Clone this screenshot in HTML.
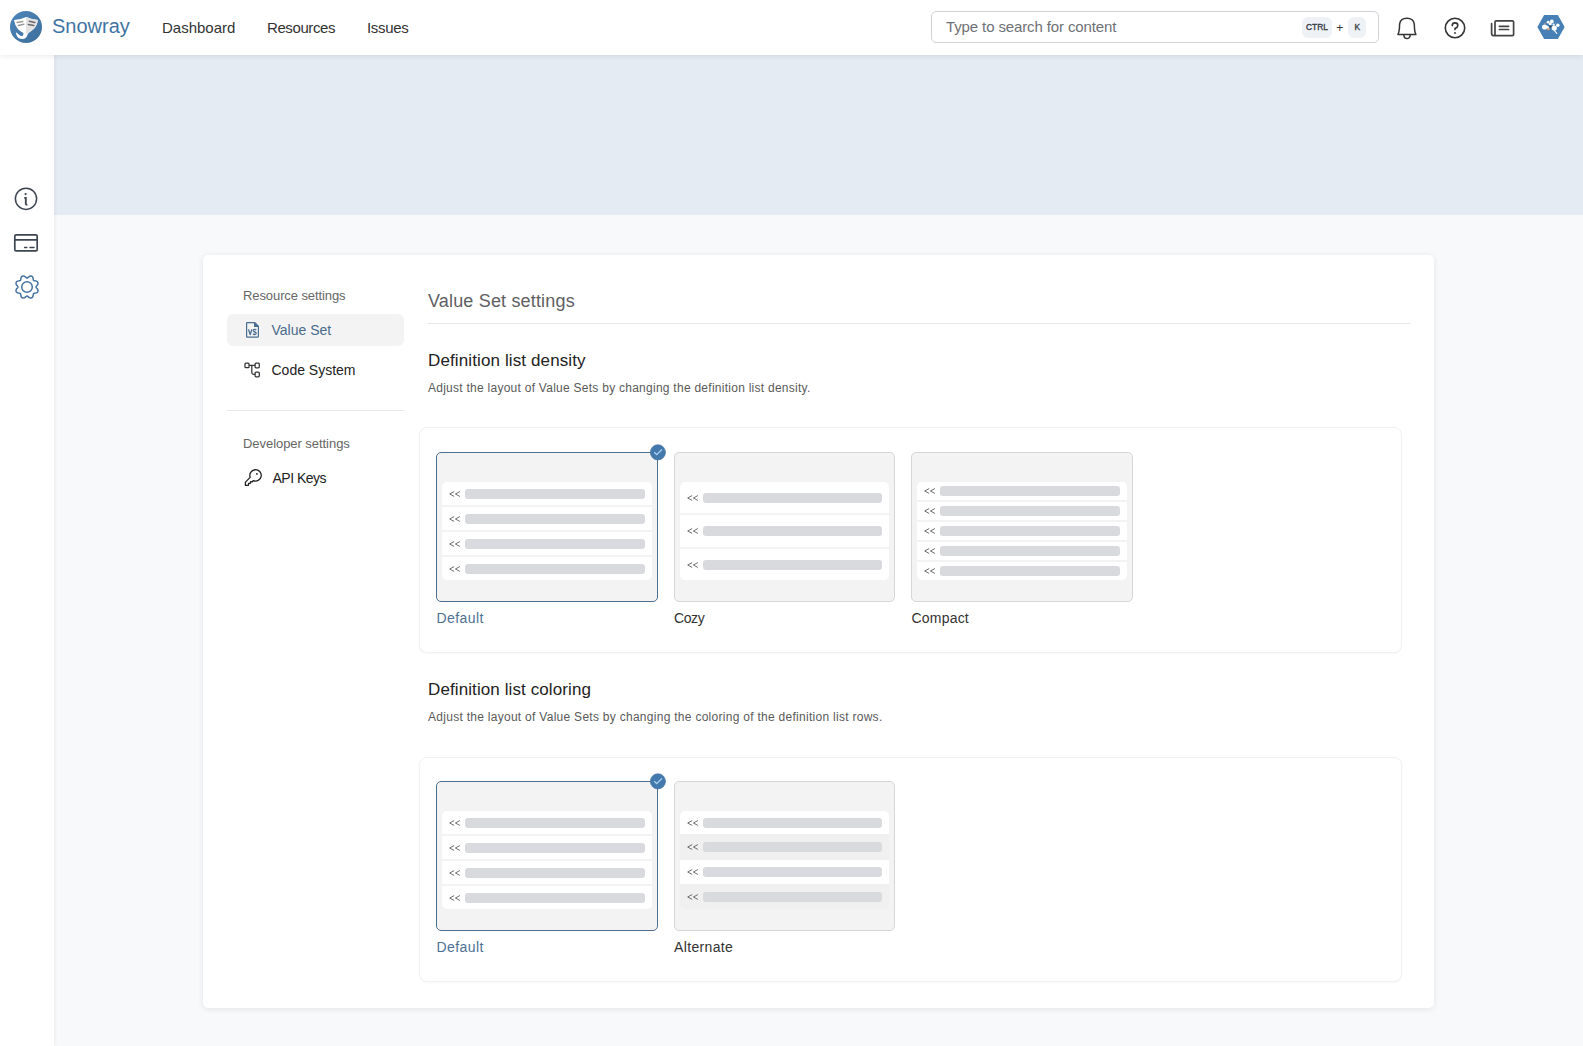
<!DOCTYPE html>
<html><head><meta charset="utf-8">
<style>
*{box-sizing:border-box;margin:0;padding:0}
html,body{width:1583px;height:1046px;overflow:hidden;background:#f7f9fb;font-family:"Liberation Sans",sans-serif;color:#333}
.abs{position:absolute}
#header{position:absolute;left:0;top:0;width:1583px;height:55px;background:#fff;box-shadow:0 1px 6px rgba(0,0,0,0.085);z-index:5}
#side{position:absolute;left:0;top:55px;width:54px;height:991px;background:#fff;box-shadow:1px 0 4px rgba(0,0,0,0.055);z-index:4}
#banner{position:absolute;left:54px;top:55px;width:1529px;height:160px;background:#e5ebf3}
.t{position:absolute;white-space:nowrap;line-height:1}
#card{position:absolute;left:203px;top:255px;width:1231px;height:753px;background:#fff;border-radius:5px;box-shadow:0 1px 6px rgba(0,0,0,0.09)}
.panel{position:absolute;left:419px;width:983px;height:226px;border:1px solid #f1f1f1;border-radius:8px;background:#fff;box-shadow:0 1px 2px rgba(0,0,0,0.035)}
.opt{position:absolute;width:222px;height:150px;background:#f3f3f3;border:1px solid #d6d6d6;border-radius:5px}
.opt.sel{border-color:#4f6f8e}
.list{position:absolute;left:5px;right:5px;background:#fff;border-radius:5px;overflow:hidden}
.row{position:absolute;left:0;right:0;background:#fff}
.row .ch{position:absolute;left:7px;font-size:10px;color:#555;letter-spacing:-0.5px}
.row .bar{position:absolute;left:23px;right:7px;height:10px;background:#d9dade;border-radius:3px}
.lbl{position:absolute;font-size:15px;line-height:1;white-space:nowrap;color:#333}
.lbl.sel{color:#4a77a4}
.chk{position:absolute;width:16px;height:16px;border-radius:50%;background:#4479a9}
</style></head><body>
<div id="header">
  <svg class="abs" style="left:10px;top:11px" width="32" height="32" viewBox="0 0 32 32">
    <defs><linearGradient id="lg" x1="0" y1="0" x2="1" y2="1"><stop offset="0" stop-color="#4d86bb"/><stop offset="1" stop-color="#3d6e9b"/></linearGradient><clipPath id="rh"><rect x="16" y="0" width="16" height="22.6"/></clipPath></defs>
    <circle cx="16" cy="16" r="16" fill="url(#lg)"/>
    <path id="ray" d="M4 9 Q10.5 8.6 16.2 6 Q22 8.6 27.9 9 Q27 16.5 20.5 20.6 Q18 21.8 17.4 24 Q16.6 27.6 12.6 28.1 Q8.4 28.3 6.8 24.8 Q6 23 5.9 21.3 Q7.6 22.4 9.4 24 Q11.2 25.6 12.9 24.4 Q14 23.2 13 21.8 Q10.5 20.4 8 18.2 Q4.8 14.6 4 9 Z" fill="#fff"/>
    <path d="M4 9 Q10.5 8.6 16.2 6 Q22 8.6 27.9 9 Q27 16.5 20.5 20.6 Q18 21.8 17.4 24 Q16.6 27.6 12.6 28.1 Q8.4 28.3 6.8 24.8 Q6 23 5.9 21.3 Q7.6 22.4 9.4 24 Q11.2 25.6 12.9 24.4 Q14 23.2 13 21.8 Q10.5 20.4 8 18.2 Q4.8 14.6 4 9 Z" fill="#e4e4e4" clip-path="url(#rh)"/>
    <path d="M7.1 11.4 L12.8 10.4 M8.3 14.5 L13.8 13.3" stroke="#9a9a9a" stroke-width="1.5" stroke-linecap="round"/>
    <path d="M19.3 10.2 L24.8 11.6 M18.3 13.5 L23.8 14.5" stroke="#6a6a6a" stroke-width="1.5" stroke-linecap="round"/>
  </svg>
  <div class="t" style="left:52px;top:16px;font-size:20px;color:#3f74a3">Snowray</div>
  <div class="t" style="left:162px;top:20px;font-size:15px;color:#333">Dashboard</div>
  <div class="t" style="left:267px;top:20px;font-size:15px;color:#333;letter-spacing:-0.4px">Resources</div>
  <div class="t" style="left:367px;top:20px;font-size:15px;color:#333;letter-spacing:-0.3px">Issues</div>
  <div class="abs" style="left:931px;top:11px;width:448px;height:32px;border:1px solid #cfd3d8;border-radius:5px"></div>
  <div class="t" style="left:946px;top:19.4px;font-size:15px;color:#6e7175;letter-spacing:-0.12px">Type to search for content</div>

  <div class="abs" style="left:1302px;top:17px;width:30px;height:20px;border-radius:6px;background:#eef2f7;box-shadow:0 1px 1px rgba(0,0,0,0.06)"></div>
  <div class="t" style="left:1306px;top:22.6px;font-size:8.4px;color:#3a4048;-webkit-text-stroke:0.35px #3a4048;letter-spacing:0px">CTRL</div>
  <div class="t" style="left:1336.3px;top:22.3px;font-size:12px;color:#333">+</div>
  <div class="abs" style="left:1348px;top:17px;width:18px;height:20px;border-radius:6px;background:#eef2f7;box-shadow:0 1px 1px rgba(0,0,0,0.06)"></div>
  <div class="t" style="left:1354.6px;top:22.6px;font-size:8.4px;color:#3a4048;-webkit-text-stroke:0.35px #3a4048">K</div>
  <svg class="abs" style="left:1390px;top:10px" width="36" height="36" viewBox="0 0 36 36" fill="none" stroke="#333" stroke-width="1.5" stroke-linejoin="round">
    <path d="M7.9 24.5 Q9.2 22 9.4 18.5 L9.6 14.2 Q10.2 8.3 16.9 8.3 Q23.6 8.3 24.3 14.2 L24.5 18.5 Q24.7 22 25.9 24.5 Z"/>
    <path d="M13.8 24.8 Q14 28.6 17 28.6 Q20 28.6 20.3 24.8"/>
  </svg>
  <svg class="abs" style="left:1437px;top:10px" width="36" height="36" viewBox="0 0 36 36" fill="none" stroke="#333" stroke-width="1.6">
    <circle cx="18" cy="18" r="9.7"/>
    <path d="M15.2 15.6 Q15.3 12.9 18 12.9 Q20.8 12.9 20.8 15.4 Q20.8 17.2 18 18.4 L18 19.6" stroke-linecap="round"/>
    <circle cx="18" cy="23" r="0.9" fill="#333" stroke="none"/>
  </svg>
  <svg class="abs" style="left:1485px;top:10px" width="40" height="35" viewBox="0 0 40 35" fill="none" stroke="#444" stroke-width="1.7" stroke-linecap="round" stroke-linejoin="round">
    <path d="M10 25 L10 12 Q10 10.8 11.2 10.8 L27.4 10.8 Q28.6 10.8 28.6 12 L28.6 24.6 Q28.6 25.6 27.4 25.6 L8.6 25.6 Q6.6 25.6 6.6 23.4 L6.6 13.6"/>
    <path d="M14.4 16.3 L23.6 16.3 M14.4 19.5 L23.6 19.5"/>
  </svg>
  <svg class="abs" style="left:1536px;top:14px" width="30" height="26" viewBox="0 0 30 26">
    <path d="M8.6 1.6 L21.4 1.6 L27.9 13 L21.4 24.4 L8.6 24.4 L2.1 13 Z" fill="#4680b6" stroke="#4680b6" stroke-width="1.4" stroke-linejoin="round"/>
    <g fill="#fff">
    <circle cx="8.6" cy="13" r="2.6"/>
    <circle cx="11.4" cy="13.2" r="1.5"/>
    <circle cx="12.1" cy="8.2" r="1.4"/>
    <circle cx="15.8" cy="7.4" r="1.9"/>
    <circle cx="14.3" cy="9.8" r="1.5"/>
    <circle cx="21.8" cy="11.3" r="1.8"/>
    <circle cx="18.3" cy="14" r="2.6"/>
    <circle cx="17.6" cy="10.6" r="1.1"/>
    </g>
    <circle cx="14.3" cy="12.4" r="1.25" fill="#33506e"/>
    <circle cx="12.4" cy="15.1" r="1.25" fill="#e8a873"/>
    <circle cx="9" cy="9.4" r="0.6" fill="#d9a27a"/>
    <circle cx="19.6" cy="9.3" r="0.5" fill="#8aa"/>
    <path d="M18.4 16.5 L20.8 19.4" stroke="#fff" stroke-width="1.1" stroke-linecap="round"/>
  </svg>
</div>
<div id="side">
  <svg class="abs" style="left:12px;top:130px" width="30" height="30" viewBox="0 0 30 30" fill="none" stroke="#3d4550" stroke-width="1.5">
    <circle cx="14" cy="13.8" r="10.6"/>
    <circle cx="13.6" cy="9.1" r="1.1" fill="#3d4550" stroke="none"/>
    <path d="M12.3 12.9 L13.8 12.9 L13.8 19.2 Q13.9 19.9 15.4 19.9" stroke-width="1.85"/>
  </svg>
  <svg class="abs" style="left:10px;top:174px" width="34" height="26" viewBox="0 0 34 26" fill="none" stroke="#3d4550" stroke-width="1.7" stroke-linecap="round">
    <rect x="4.8" y="5.9" width="22.4" height="15.9" rx="1.4"/>
    <path d="M4.8 10.9 L27.2 10.9" />
    <path d="M14.6 18.4 L16.8 18.4 M20 18.4 L24 18.4" stroke-width="1.5"/>
  </svg>
  <svg class="abs" style="left:12px;top:217px" width="30" height="30" viewBox="0 0 30 30" fill="none" stroke="#4673a2" stroke-width="1.5" stroke-linejoin="round">
    <path d="M15.00 6.06 C15.38 6.06 15.76 5.64 16.14 5.35 C16.52 5.06 16.90 4.53 17.28 4.31 C17.65 4.09 17.99 4.02 18.41 4.01 C18.82 4.00 19.37 4.08 19.75 4.26 C20.13 4.43 20.45 4.69 20.68 5.06 C20.91 5.43 21.04 6.03 21.14 6.49 C21.24 6.94 21.20 7.46 21.29 7.77 C21.37 8.09 21.48 8.21 21.63 8.37 C21.79 8.52 21.91 8.63 22.23 8.71 C22.54 8.80 23.06 8.76 23.51 8.86 C23.97 8.96 24.57 9.09 24.94 9.32 C25.31 9.55 25.57 9.87 25.74 10.25 C25.92 10.63 26.00 11.18 25.99 11.59 C25.98 12.01 25.91 12.35 25.69 12.72 C25.47 13.10 24.94 13.48 24.65 13.86 C24.36 14.24 23.94 14.62 23.94 15.00 C23.94 15.38 24.36 15.76 24.65 16.14 C24.94 16.52 25.47 16.90 25.69 17.28 C25.91 17.65 25.98 17.99 25.99 18.41 C26.00 18.82 25.92 19.37 25.74 19.75 C25.57 20.13 25.31 20.45 24.94 20.68 C24.57 20.91 23.97 21.04 23.51 21.14 C23.06 21.24 22.54 21.20 22.23 21.29 C21.91 21.37 21.79 21.48 21.63 21.63 C21.48 21.79 21.37 21.91 21.29 22.23 C21.20 22.54 21.24 23.06 21.14 23.51 C21.04 23.97 20.91 24.57 20.68 24.94 C20.45 25.31 20.13 25.57 19.75 25.74 C19.37 25.92 18.82 26.00 18.41 25.99 C17.99 25.98 17.65 25.91 17.28 25.69 C16.90 25.47 16.52 24.94 16.14 24.65 C15.76 24.36 15.38 23.94 15.00 23.94 C14.62 23.94 14.24 24.36 13.86 24.65 C13.48 24.94 13.10 25.47 12.72 25.69 C12.35 25.91 12.01 25.98 11.59 25.99 C11.18 26.00 10.63 25.92 10.25 25.74 C9.87 25.57 9.55 25.31 9.32 24.94 C9.09 24.57 8.96 23.97 8.86 23.51 C8.76 23.06 8.80 22.54 8.71 22.23 C8.63 21.91 8.52 21.79 8.37 21.63 C8.21 21.48 8.09 21.37 7.77 21.29 C7.46 21.20 6.94 21.24 6.49 21.14 C6.03 21.04 5.43 20.91 5.06 20.68 C4.69 20.45 4.43 20.13 4.26 19.75 C4.08 19.37 4.00 18.82 4.01 18.41 C4.02 17.99 4.09 17.65 4.31 17.28 C4.53 16.90 5.06 16.52 5.35 16.14 C5.64 15.76 6.06 15.38 6.06 15.00 C6.06 14.62 5.64 14.24 5.35 13.86 C5.06 13.48 4.53 13.10 4.31 12.72 C4.09 12.35 4.02 12.01 4.01 11.59 C4.00 11.18 4.08 10.63 4.26 10.25 C4.43 9.87 4.69 9.55 5.06 9.32 C5.43 9.09 6.03 8.96 6.49 8.86 C6.94 8.76 7.46 8.80 7.77 8.71 C8.09 8.63 8.21 8.52 8.37 8.37 C8.52 8.21 8.63 8.09 8.71 7.77 C8.80 7.46 8.76 6.94 8.86 6.49 C8.96 6.03 9.09 5.43 9.32 5.06 C9.55 4.69 9.87 4.43 10.25 4.26 C10.63 4.08 11.18 4.00 11.59 4.01 C12.01 4.02 12.35 4.09 12.72 4.31 C13.10 4.53 13.48 5.06 13.86 5.35 C14.24 5.64 14.62 6.06 15.00 6.06 Z"/>
    <circle cx="15" cy="15" r="5.3"/>
  </svg>
</div>
<div id="banner"></div>
<div id="card"></div>
<!--CARD-->
<div class="abs" style="left:227px;top:314px;width:177px;height:32px;border-radius:6px;background:#f3f3f3"></div>
<div class="t" style="left:243px;top:289.20px;font-size:13px;color:#666;letter-spacing:-0.09px">Resource settings</div>
<div class="t" style="left:271.5px;top:323.05px;font-size:14px;color:#4b6b8b;">Value Set</div>
<div class="t" style="left:271.5px;top:362.75px;font-size:14px;color:#222;">Code System</div>
<div class="abs" style="left:227px;top:410px;width:177px;height:1px;background:#e8e8e8"></div>
<div class="t" style="left:243px;top:437.00px;font-size:13px;color:#666;letter-spacing:-0.05px">Developer settings</div>
<div class="t" style="left:272.5px;top:470.95px;font-size:14px;color:#222;letter-spacing:-0.5px">API Keys</div>
<svg class="abs" style="left:244px;top:320px" width="18" height="20" viewBox="0 0 18 20" fill="none" stroke="#4a6d90" stroke-width="1.2" stroke-linejoin="round">
<path d="M3 2.6 L10.6 2.6 L14.4 6.5 L14.4 16.2 Q14.4 17.2 13.4 17.2 L3 17.2 Q2.6 17.2 2.6 16.6 L2.6 3.2 Q2.6 2.6 3 2.6 Z"/><path d="M10.6 2.6 L10.6 6.5 L14.4 6.5 Z" fill="#4a6d90"/>
<path d="M4.5 9.4 L6.2 14.6 L7.9 9.4" stroke-width="1.35"/><path d="M12.2 10 Q11.6 9.3 10.6 9.4 Q9.2 9.6 9.4 10.9 Q9.6 11.7 10.8 12 Q12.2 12.4 12.1 13.4 Q11.9 14.6 10.6 14.5 Q9.6 14.4 9.1 13.8" stroke-width="1.35"/>
</svg>
<svg class="abs" style="left:243px;top:361px" width="19" height="18" viewBox="0 0 19 18" fill="none" stroke="#333" stroke-width="1.25" stroke-linejoin="round">
<rect x="1.95" y="2.2" width="4.1" height="4.5" rx="1"/><rect x="12.1" y="2.2" width="4.2" height="4.6" rx="1"/><rect x="12.1" y="11.1" width="4.2" height="4.7" rx="1"/>
<path d="M6.05 4.4 L12.1 4.4 M8.8 4.4 L8.8 11.6 Q8.8 13.45 10.6 13.45 L12.1 13.45"/>
</svg>
<svg class="abs" style="left:243px;top:467px" width="21" height="21" viewBox="0 0 21 21" fill="none" stroke="#222" stroke-width="1.3" stroke-linejoin="round">
<path d="M7.2 10.4 A5.7 5.7 0 1 1 10.2 13.6 L9.4 14.8 L7.6 14.6 L7.2 16.4 L5.6 16.4 L5.4 18.4 L2.4 18.4 L2.4 15.1 Z"/>
<circle cx="13.9" cy="6.9" r="0.9" fill="#222" stroke="none"/>
</svg>
<div class="t" style="left:428px;top:292.26px;font-size:18px;color:#5f6063;letter-spacing:0.17px">Value Set settings</div>
<div class="abs" style="left:428px;top:323px;width:982px;height:1px;background:#e8e8e8"></div>
<div class="t" style="left:428px;top:351.91px;font-size:17px;color:#222;letter-spacing:0.12px">Definition list density</div>
<div class="t" style="left:428px;top:381.64px;font-size:12px;color:#5a5a5a;letter-spacing:0.26px">Adjust the layout of Value Sets by changing the definition list density.</div>
<div class="panel" style="top:427px;height:226px"></div>
<div class="opt sel" style="left:436px;top:452px;width:222px"></div>
<div class="abs" style="left:442px;top:482px;width:210px;height:98px;border-radius:5px;overflow:hidden;background:#f3f3f3">
<div class="abs" style="left:0;top:0px;width:210px;height:23px;background:#fff"></div>
<div class="abs" style="left:0;top:25px;width:210px;height:23px;background:#fff"></div>
<div class="abs" style="left:0;top:50px;width:210px;height:23px;background:#fff"></div>
<div class="abs" style="left:0;top:75px;width:210px;height:23px;background:#fff"></div>
</div>
<svg class="abs" style="left:449px;top:489.5px" width="12" height="8" viewBox="0 0 12 8" fill="none" stroke="#666" stroke-width="0.95"><path d="M5.2 1.55 L0.7 4 L5.2 6.45 M10.9 1.55 L6.4 4 L10.9 6.45"/></svg>
<div class="abs" style="left:465px;top:488.50px;width:180px;height:10px;border-radius:3px;background:#d9dadd"></div>
<svg class="abs" style="left:449px;top:514.5px" width="12" height="8" viewBox="0 0 12 8" fill="none" stroke="#666" stroke-width="0.95"><path d="M5.2 1.55 L0.7 4 L5.2 6.45 M10.9 1.55 L6.4 4 L10.9 6.45"/></svg>
<div class="abs" style="left:465px;top:513.50px;width:180px;height:10px;border-radius:3px;background:#d9dadd"></div>
<svg class="abs" style="left:449px;top:539.5px" width="12" height="8" viewBox="0 0 12 8" fill="none" stroke="#666" stroke-width="0.95"><path d="M5.2 1.55 L0.7 4 L5.2 6.45 M10.9 1.55 L6.4 4 L10.9 6.45"/></svg>
<div class="abs" style="left:465px;top:538.50px;width:180px;height:10px;border-radius:3px;background:#d9dadd"></div>
<svg class="abs" style="left:449px;top:564.5px" width="12" height="8" viewBox="0 0 12 8" fill="none" stroke="#666" stroke-width="0.95"><path d="M5.2 1.55 L0.7 4 L5.2 6.45 M10.9 1.55 L6.4 4 L10.9 6.45"/></svg>
<div class="abs" style="left:465px;top:563.50px;width:180px;height:10px;border-radius:3px;background:#d9dadd"></div>
<svg class="abs" style="left:649px;top:444px" width="17" height="17" viewBox="0 0 17 17"><circle cx="8.9" cy="8.3" r="7.6" fill="#4479ad" stroke="#3f6e9c" stroke-width="0.6"/><path d="M5.2 8.3 L7.7 10.6 L12.9 5.5" fill="none" stroke="#a9d1f2" stroke-width="1.3"/></svg>
<div class="opt" style="left:674px;top:452px;width:221px"></div>
<div class="abs" style="left:680px;top:482px;width:209px;height:98px;border-radius:5px;overflow:hidden;background:#f3f3f3">
<div class="abs" style="left:0;top:0px;width:209px;height:31px;background:#fff"></div>
<div class="abs" style="left:0;top:33px;width:209px;height:32px;background:#fff"></div>
<div class="abs" style="left:0;top:67px;width:209px;height:31px;background:#fff"></div>
</div>
<svg class="abs" style="left:687px;top:493.5px" width="12" height="8" viewBox="0 0 12 8" fill="none" stroke="#666" stroke-width="0.95"><path d="M5.2 1.55 L0.7 4 L5.2 6.45 M10.9 1.55 L6.4 4 L10.9 6.45"/></svg>
<div class="abs" style="left:703px;top:492.50px;width:179px;height:10px;border-radius:3px;background:#d9dadd"></div>
<svg class="abs" style="left:687px;top:527.0px" width="12" height="8" viewBox="0 0 12 8" fill="none" stroke="#666" stroke-width="0.95"><path d="M5.2 1.55 L0.7 4 L5.2 6.45 M10.9 1.55 L6.4 4 L10.9 6.45"/></svg>
<div class="abs" style="left:703px;top:526.00px;width:179px;height:10px;border-radius:3px;background:#d9dadd"></div>
<svg class="abs" style="left:687px;top:560.5px" width="12" height="8" viewBox="0 0 12 8" fill="none" stroke="#666" stroke-width="0.95"><path d="M5.2 1.55 L0.7 4 L5.2 6.45 M10.9 1.55 L6.4 4 L10.9 6.45"/></svg>
<div class="abs" style="left:703px;top:559.50px;width:179px;height:10px;border-radius:3px;background:#d9dadd"></div>
<div class="opt" style="left:911px;top:452px;width:222px"></div>
<div class="abs" style="left:917px;top:482px;width:210px;height:98px;border-radius:5px;overflow:hidden;background:#f3f3f3">
<div class="abs" style="left:0;top:0px;width:210px;height:18px;background:#fff"></div>
<div class="abs" style="left:0;top:20px;width:210px;height:18px;background:#fff"></div>
<div class="abs" style="left:0;top:40px;width:210px;height:18px;background:#fff"></div>
<div class="abs" style="left:0;top:60px;width:210px;height:18px;background:#fff"></div>
<div class="abs" style="left:0;top:80px;width:210px;height:18px;background:#fff"></div>
</div>
<svg class="abs" style="left:924px;top:487.0px" width="12" height="8" viewBox="0 0 12 8" fill="none" stroke="#666" stroke-width="0.95"><path d="M5.2 1.55 L0.7 4 L5.2 6.45 M10.9 1.55 L6.4 4 L10.9 6.45"/></svg>
<div class="abs" style="left:940px;top:486.00px;width:180px;height:10px;border-radius:3px;background:#d9dadd"></div>
<svg class="abs" style="left:924px;top:507.0px" width="12" height="8" viewBox="0 0 12 8" fill="none" stroke="#666" stroke-width="0.95"><path d="M5.2 1.55 L0.7 4 L5.2 6.45 M10.9 1.55 L6.4 4 L10.9 6.45"/></svg>
<div class="abs" style="left:940px;top:506.00px;width:180px;height:10px;border-radius:3px;background:#d9dadd"></div>
<svg class="abs" style="left:924px;top:527.0px" width="12" height="8" viewBox="0 0 12 8" fill="none" stroke="#666" stroke-width="0.95"><path d="M5.2 1.55 L0.7 4 L5.2 6.45 M10.9 1.55 L6.4 4 L10.9 6.45"/></svg>
<div class="abs" style="left:940px;top:526.00px;width:180px;height:10px;border-radius:3px;background:#d9dadd"></div>
<svg class="abs" style="left:924px;top:547.0px" width="12" height="8" viewBox="0 0 12 8" fill="none" stroke="#666" stroke-width="0.95"><path d="M5.2 1.55 L0.7 4 L5.2 6.45 M10.9 1.55 L6.4 4 L10.9 6.45"/></svg>
<div class="abs" style="left:940px;top:546.00px;width:180px;height:10px;border-radius:3px;background:#d9dadd"></div>
<svg class="abs" style="left:924px;top:567.0px" width="12" height="8" viewBox="0 0 12 8" fill="none" stroke="#666" stroke-width="0.95"><path d="M5.2 1.55 L0.7 4 L5.2 6.45 M10.9 1.55 L6.4 4 L10.9 6.45"/></svg>
<div class="abs" style="left:940px;top:566.00px;width:180px;height:10px;border-radius:3px;background:#d9dadd"></div>
<div class="t" style="left:436.5px;top:611.15px;font-size:14px;color:#4d7195;letter-spacing:0.43px">Default</div>
<div class="t" style="left:674px;top:611.15px;font-size:14px;color:#333;letter-spacing:-0.4px">Cozy</div>
<div class="t" style="left:911.5px;top:611.15px;font-size:14px;color:#333;letter-spacing:0.2px">Compact</div>
<div class="t" style="left:428px;top:680.51px;font-size:17px;color:#222;letter-spacing:0.1px">Definition list coloring</div>
<div class="t" style="left:428px;top:710.74px;font-size:12px;color:#5a5a5a;letter-spacing:0.28px">Adjust the layout of Value Sets by changing the coloring of the definition list rows.</div>
<div class="panel" style="top:757px;height:225px"></div>
<div class="opt sel" style="left:436px;top:781px;width:222px"></div>
<div class="abs" style="left:442px;top:811px;width:210px;height:98px;border-radius:5px;overflow:hidden;background:#f3f3f3">
<div class="abs" style="left:0;top:0px;width:210px;height:23px;background:#fff"></div>
<div class="abs" style="left:0;top:25px;width:210px;height:23px;background:#fff"></div>
<div class="abs" style="left:0;top:50px;width:210px;height:23px;background:#fff"></div>
<div class="abs" style="left:0;top:75px;width:210px;height:23px;background:#fff"></div>
</div>
<svg class="abs" style="left:449px;top:818.5px" width="12" height="8" viewBox="0 0 12 8" fill="none" stroke="#666" stroke-width="0.95"><path d="M5.2 1.55 L0.7 4 L5.2 6.45 M10.9 1.55 L6.4 4 L10.9 6.45"/></svg>
<div class="abs" style="left:465px;top:817.50px;width:180px;height:10px;border-radius:3px;background:#d9dadd"></div>
<svg class="abs" style="left:449px;top:843.5px" width="12" height="8" viewBox="0 0 12 8" fill="none" stroke="#666" stroke-width="0.95"><path d="M5.2 1.55 L0.7 4 L5.2 6.45 M10.9 1.55 L6.4 4 L10.9 6.45"/></svg>
<div class="abs" style="left:465px;top:842.50px;width:180px;height:10px;border-radius:3px;background:#d9dadd"></div>
<svg class="abs" style="left:449px;top:868.5px" width="12" height="8" viewBox="0 0 12 8" fill="none" stroke="#666" stroke-width="0.95"><path d="M5.2 1.55 L0.7 4 L5.2 6.45 M10.9 1.55 L6.4 4 L10.9 6.45"/></svg>
<div class="abs" style="left:465px;top:867.50px;width:180px;height:10px;border-radius:3px;background:#d9dadd"></div>
<svg class="abs" style="left:449px;top:893.5px" width="12" height="8" viewBox="0 0 12 8" fill="none" stroke="#666" stroke-width="0.95"><path d="M5.2 1.55 L0.7 4 L5.2 6.45 M10.9 1.55 L6.4 4 L10.9 6.45"/></svg>
<div class="abs" style="left:465px;top:892.50px;width:180px;height:10px;border-radius:3px;background:#d9dadd"></div>
<svg class="abs" style="left:649px;top:773px" width="17" height="17" viewBox="0 0 17 17"><circle cx="8.9" cy="8.3" r="7.6" fill="#4479ad" stroke="#3f6e9c" stroke-width="0.6"/><path d="M5.2 8.3 L7.7 10.6 L12.9 5.5" fill="none" stroke="#a9d1f2" stroke-width="1.3"/></svg>
<div class="opt" style="left:674px;top:781px;width:221px"></div>
<div class="abs" style="left:680px;top:811px;width:209px;height:98px;border-radius:5px;overflow:hidden;background:#f0f0f0">
<div class="abs" style="left:0;top:0px;width:209px;height:23px;background:#fff"></div>
<div class="abs" style="left:0;top:23px;width:209px;height:26px;background:#f0f0f0"></div>
<div class="abs" style="left:0;top:49px;width:209px;height:24px;background:#fff"></div>
<div class="abs" style="left:0;top:73px;width:209px;height:25px;background:#f0f0f0"></div>
</div>
<svg class="abs" style="left:687px;top:818.5px" width="12" height="8" viewBox="0 0 12 8" fill="none" stroke="#666" stroke-width="0.95"><path d="M5.2 1.55 L0.7 4 L5.2 6.45 M10.9 1.55 L6.4 4 L10.9 6.45"/></svg>
<div class="abs" style="left:703px;top:817.50px;width:179px;height:10px;border-radius:3px;background:#d9dadd"></div>
<svg class="abs" style="left:687px;top:843.0px" width="12" height="8" viewBox="0 0 12 8" fill="none" stroke="#666" stroke-width="0.95"><path d="M5.2 1.55 L0.7 4 L5.2 6.45 M10.9 1.55 L6.4 4 L10.9 6.45"/></svg>
<div class="abs" style="left:703px;top:842.00px;width:179px;height:10px;border-radius:3px;background:#d9dadd"></div>
<svg class="abs" style="left:687px;top:868.0px" width="12" height="8" viewBox="0 0 12 8" fill="none" stroke="#666" stroke-width="0.95"><path d="M5.2 1.55 L0.7 4 L5.2 6.45 M10.9 1.55 L6.4 4 L10.9 6.45"/></svg>
<div class="abs" style="left:703px;top:867.00px;width:179px;height:10px;border-radius:3px;background:#d9dadd"></div>
<svg class="abs" style="left:687px;top:892.5px" width="12" height="8" viewBox="0 0 12 8" fill="none" stroke="#666" stroke-width="0.95"><path d="M5.2 1.55 L0.7 4 L5.2 6.45 M10.9 1.55 L6.4 4 L10.9 6.45"/></svg>
<div class="abs" style="left:703px;top:891.50px;width:179px;height:10px;border-radius:3px;background:#d9dadd"></div>
<div class="t" style="left:436.5px;top:940.05px;font-size:14px;color:#4d7195;letter-spacing:0.43px">Default</div>
<div class="t" style="left:674px;top:940.05px;font-size:14px;color:#333;letter-spacing:0.35px">Alternate</div>
<!--/CARD-->
</body></html>
